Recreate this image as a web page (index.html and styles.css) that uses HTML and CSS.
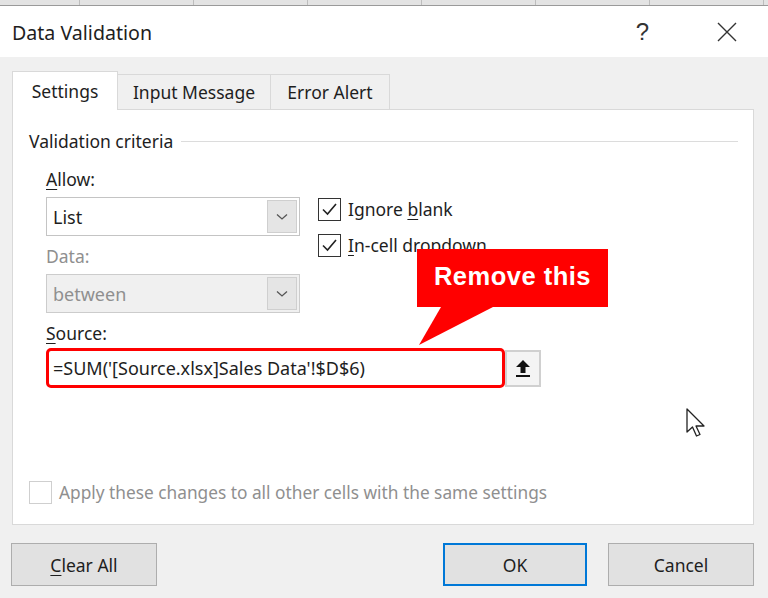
FILE: index.html
```html
<!DOCTYPE html>
<html lang="en">
<head>
    <meta charset="UTF-8">
    <title>Data Validation</title>
    <link rel="stylesheet" href="styles.css">
</head>
<body>
    <div class="sheet-strip">
        <span class="col first"></span>
        <span class="col"></span>
        <span class="col"></span>
        <span class="col"></span>
        <span class="col"></span>
        <span class="col"></span>
        <span class="col"></span>
    </div>

    <div class="titlebar">
        <span class="title">Data Validation</span>
        <span class="help">?</span>
        <svg class="close" width="20" height="20" viewBox="0 0 20 20">
            <path d="M1 1 L19 19 M19 1 L1 19" stroke="#333" stroke-width="1.4" fill="none"/>
        </svg>
    </div>

    <div class="tabs">
        <div class="tab active">Settings</div>
        <div class="tab">Input Message</div>
        <div class="tab">Error Alert</div>
    </div>

    <div class="panel">
        <div class="group-title">
            <span>Validation criteria</span>
            <span class="rule"></span>
        </div>

        <div class="criteria">
            <div class="left">
                <div class="label"><u>A</u>llow:</div>
                <div class="select">
                    <span class="value">List</span>
                    <span class="arrow">
                        <svg width="12" height="8" viewBox="0 0 12 8"><path d="M1 1.5 L6 6 L11 1.5" stroke="#555" stroke-width="1.3" fill="none"/></svg>
                    </span>
                </div>
                <div class="label disabled">Data:</div>
                <div class="select off">
                    <span class="value">between</span>
                    <span class="arrow">
                        <svg width="12" height="8" viewBox="0 0 12 8"><path d="M1 1.5 L6 6 L11 1.5" stroke="#555" stroke-width="1.3" fill="none"/></svg>
                    </span>
                </div>
            </div>
            <div class="right">
                <div class="check-row">
                    <span class="box">
                        <svg width="19" height="19" viewBox="0 0 19 19"><path d="M3 9.5 L7.5 14 L16 4" stroke="#222" stroke-width="1.6" fill="none"/></svg>
                    </span>
                    <span>Ignore <u>b</u>lank</span>
                </div>
                <div class="check-row">
                    <span class="box">
                        <svg width="19" height="19" viewBox="0 0 19 19"><path d="M3 9.5 L7.5 14 L16 4" stroke="#222" stroke-width="1.6" fill="none"/></svg>
                    </span>
                    <span><u>I</u>n-cell dropdown</span>
                </div>
            </div>
        </div>

        <div class="label source-label"><u>S</u>ource:</div>
        <div class="source-row">
            <div class="source-input">=SUM('[Source.xlsx]Sales Data'!$D$6)</div>
            <div class="pick-btn">
                <svg width="18" height="20" viewBox="0 0 18 20">
                    <path d="M9 2 L16 9 L11.5 9 L11.5 15 L6.5 15 L6.5 9 L2 9 Z" fill="#111"/>
                    <rect x="2" y="17" width="14" height="2" fill="#111"/>
                </svg>
            </div>
        </div>

        <div class="apply-row">
            <span class="box empty"></span>
            <span>Apply these changes to all other cells with the same settings</span>
        </div>
    </div>

    <div class="footer">
        <div class="btn"><u>C</u>lear All</div>
        <div class="spacer"></div>
        <div class="btn default">OK</div>
        <div class="btn">Cancel</div>
    </div>

    <!-- annotation overlay -->
    <div class="callout">
        <div class="callout-box">Remove this</div>
        <svg class="callout-tail" width="80" height="40" viewBox="0 0 80 40">
            <polygon points="24,0 76,0 2,38" fill="#ff0000"/>
        </svg>
    </div>

    <svg class="cursor" width="24" height="34" viewBox="0 0 24 34">
        <path d="M2 2 L2 25 L7.5 20 L11.5 29 L15 27.5 L11 19 L19 19 Z" fill="#fff" stroke="#222" stroke-width="1.3" stroke-linejoin="round"/>
    </svg>
</body>
</html>
```

FILE: styles.css
```css
body{
    margin: 0;
    width: 768px;
    height: 598px;
    overflow: hidden;
    background-color: #f0f0f0;
    font-family: "Noto Sans", "Open Sans", sans-serif;
    color: #1e1e1e;
    position: relative;
}
u{
    text-decoration-thickness: 1px;
    text-underline-offset: 3px;
}
.sheet-strip{
    display: flex;
    height: 5px;
    background-color: #e3e3e3;
    border-bottom: 1px solid #9a9a9a;
}
.col{
    width: 113px;
    border-right: 1px solid #bdbdbd;
}
.col.first{
    width: 79px;
}
.titlebar{
    display: flex;
    align-items: center;
    height: 51px;
    background-color: #ffffff;
    padding-left: 12px;
}
.title{
    font-size: 19.6px;
    flex: 1;
    padding-top: 2px;
}
.help{
    font-size: 24px;
    color: #333;
    margin-right: 68px;
    font-family: "Liberation Sans", sans-serif;
}
.close{
    margin-right: 31px;
}
.tabs{
    display: flex;
    align-items: flex-end;
    margin-top: 14px;
    padding-left: 12px;
    height: 38px;
}
.tab{
    height: 35px;
    box-sizing: border-box;
    border: 1px solid #d9d9d9;
    border-bottom: none;
    border-left: none;
    background-color: #f0f0f0;
    font-size: 17.5px;
    padding: 0 16px;
    display: flex;
    align-items: center;
}
.tab.active{
    height: 39px;
    margin-bottom: -1px;
    background-color: #ffffff;
    border-left: 1px solid #d9d9d9;
    width: 106px;
    justify-content: center;
    padding: 0;
    position: relative;
    z-index: 1;
}
.tab:nth-child(2){
    width: 153px;
    justify-content: center;
    padding: 0;
}
.tab:nth-child(3){
    width: 119px;
    justify-content: center;
    padding: 0;
}
.panel{
    margin-left: 12px;
    width: 742px;
    height: 416px;
    box-sizing: border-box;
    background-color: #ffffff;
    border: 1px solid #d9d9d9;
    padding: 19px 15px 0 16px;
}
.group-title{
    display: flex;
    align-items: center;
    font-size: 17.5px;
    height: 24px;
}
.rule{
    flex: 1;
    height: 1px;
    background-color: #dcdcdc;
    margin-left: 8px;
}
.criteria{
    display: flex;
    padding-left: 17px;
    margin-top: 13px;
}
.left{
    width: 254px;
}
.label{
    font-size: 17.5px;
    height: 26px;
    line-height: 26px;
}
.label.disabled{
    color: #8f8f8f;
    margin-top: 7px;
}
.select{
    display: flex;
    height: 39px;
    box-sizing: border-box;
    border: 1px solid #c4c4c4;
    background-color: #ffffff;
    margin-top: 5px;
    align-items: stretch;
    padding: 2px;
}
.select .value{
    flex: 1;
    font-size: 18px;
    display: flex;
    align-items: center;
    padding-left: 4px;
}
.select .arrow{
    width: 28px;
    background-color: #e5e5e5;
    border: 1px solid #cfcfcf;
    display: flex;
    align-items: center;
    justify-content: center;
}
.select.off{
    background-color: #f0f0f0;
    border-color: #cccccc;
    margin-top: 5px;
}
.select.off .value{
    color: #8f8f8f;
}
.right{
    margin-left: 18px;
    padding-top: 31px;
}
.check-row{
    display: flex;
    align-items: center;
    gap: 7px;
    font-size: 17.5px;
    height: 24px;
    margin-bottom: 12px;
}
.box{
    width: 23px;
    height: 23px;
    box-sizing: border-box;
    border: 1px solid #333;
    display: flex;
    align-items: center;
    justify-content: center;
    background-color: #ffffff;
}
.box.empty{
    border-color: #cfcfcf;
}
.source-label{
    padding-left: 17px;
    margin-top: 7px;
}
.source-row{
    display: flex;
    padding-left: 17px;
    margin-top: 2px;
    align-items: center;
}
.source-input{
    width: 459px;
    height: 40px;
    box-sizing: border-box;
    border: 3px solid #ff0000;
    border-radius: 5px;
    font-size: 18px;
    display: flex;
    align-items: center;
    padding-left: 4px;
}
.pick-btn{
    width: 36px;
    height: 37px;
    box-sizing: border-box;
    margin-left: 0;
    background-color: #f4f4f4;
    border: 2px solid #d0d0d0;
    display: flex;
    align-items: center;
    justify-content: center;
}
.apply-row{
    display: flex;
    align-items: center;
    gap: 7px;
    margin-top: 93px;
    font-size: 17.3px;
    color: #8f8f8f;
}
.footer{
    display: flex;
    margin-top: 18px;
    padding: 0 14px 0 11px;
    gap: 21px;
}
.spacer{
    flex: 1;
}
.btn{
    width: 146px;
    height: 43px;
    box-sizing: border-box;
    border: 1px solid #adadad;
    background-color: #e1e1e1;
    font-size: 17.5px;
    display: flex;
    align-items: center;
    justify-content: center;
}
.btn.default{
    border: 2px solid #0078d7;
    width: 144px;
}
.callout{
    position: absolute;
    left: 417px;
    top: 249px;
    width: 191px;
}
.callout-box{
    height: 58px;
    background-color: #ff0000;
    color: #ffffff;
    font-family: "Liberation Sans", Arial, sans-serif;
    font-weight: bold;
    font-size: 25.5px;
    display: flex;
    align-items: center;
    justify-content: center;
    letter-spacing: 0.5px;
    padding-bottom: 3px;
    box-sizing: border-box;
}
.callout-tail{
    display: block;
}
.cursor{
    position: absolute;
    left: 685px;
    top: 407px;
}
```
